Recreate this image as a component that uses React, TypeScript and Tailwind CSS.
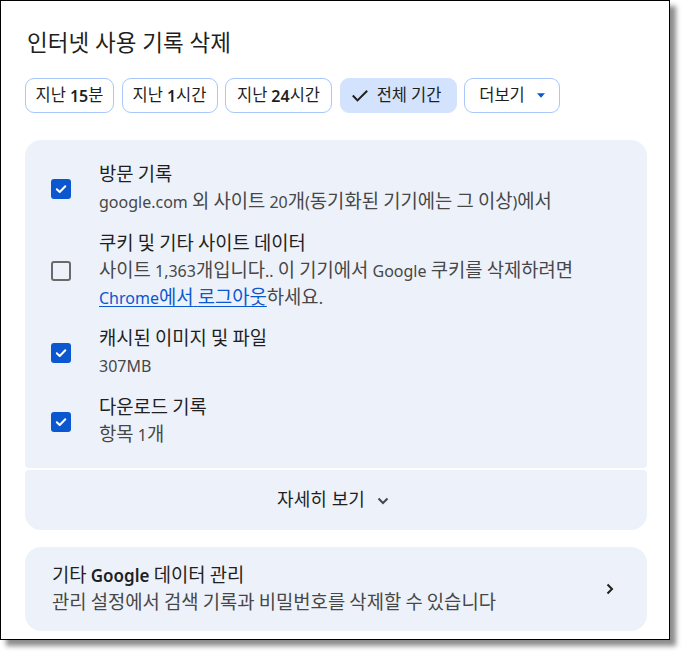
import React from "react";

const FONT = "font-['Noto_Sans','Noto_Sans_CJK_KR',sans-serif]";
const HSPLIT = /([\u3131-\u318E\uAC00-\uD7A3]+)/;
const HTEST = /^[\u3131-\u318E\uAC00-\uD7A3]+$/;

function K({ t, cls }: { t: string; cls: string }) {
  return (
    <>
      {t.split(HSPLIT).map((p, i) =>
        HTEST.test(p) ? (
          <span key={i} className={cls}>
            {p}
          </span>
        ) : (
          <React.Fragment key={i}>{p}</React.Fragment>
        )
      )}
    </>
  );
}

const BODY = "text-[18.8px] leading-none";
const CHIP = "text-[16.5px] leading-none";

function Check({ checked }: { checked: boolean }) {
  if (checked) {
    return (
      <div className="w-[20px] h-[20px] rounded-[3px] bg-[#0b57d0] flex items-center justify-center shrink-0">
        <svg width="14" height="14" viewBox="0 0 14 14">
          <path d="M2.8 7.2 L5.7 10 L11.3 4.2" fill="none" stroke="white" strokeWidth="2" strokeLinecap="round" strokeLinejoin="round" />
        </svg>
      </div>
    );
  }
  return <div className="w-[20px] h-[20px] rounded-[3px] border-2 border-[#6a6a6a] shrink-0" />;
}

function Row({ checked, children }: { checked: boolean; children: React.ReactNode }) {
  return (
    <div className="flex items-center">
      <div className="w-[74px] pl-[26px] flex">
        <Check checked={checked} />
      </div>
      <div className="flex flex-col text-[16px] leading-[27px]">{children}</div>
    </div>
  );
}

function Chip({ children, selected, w }: { children: React.ReactNode; selected?: boolean; w: string }) {
  return (
    <div
      className={
        (selected
          ? "h-[35px] rounded-[9px] bg-[#d3e3fd] border border-[#d3e3fd] flex items-center justify-center text-[16px] text-[#1f1f1f] "
          : "h-[35px] rounded-[9px] border border-[#a8c7fa] bg-white flex items-center justify-center text-[16px] text-[#1f1f1f] ") + w
      }
    >
      {children}
    </div>
  );
}

export default function App() {
  return (
    <div className={`${FONT} w-[682px] h-[667px] bg-white`}>
      <div className="w-[670px] h-[640px] border border-black bg-white shadow-[6px_6px_5px_rgba(0,0,0,0.45)] pl-[24px] pr-[22px] pt-[27px]">
        <div className="pl-[2px] text-[22.5px] leading-[30px] text-[#1f1f1f]">인터넷 사용 기록 삭제</div>
        <div className="flex gap-[7.5px] mt-[20px]">
          <Chip w="w-[89px]">
            <span className={CHIP}>지난</span>
            <span className="font-semibold ml-[4px]">15</span>
            <span className={CHIP}>분</span>
          </Chip>
          <Chip w="w-[96px]">
            <span className={CHIP}>지난</span>
            <span className="font-semibold ml-[4px]">1</span>
            <span className={CHIP}>시간</span>
          </Chip>
          <Chip w="w-[107px]">
            <span className={CHIP}>지난</span>
            <span className="font-semibold ml-[4px]">24</span>
            <span className={CHIP}>시간</span>
          </Chip>
          <Chip selected w="w-[117px]">
            <svg width="16" height="12" viewBox="0 0 16 12" className="mr-[9px] -ml-[3px]">
              <path d="M0.8 5.5 L5.5 10.4 L15.2 0.8" fill="none" stroke="#1f1f1f" strokeWidth="2" />
            </svg>
            <span className={CHIP}>전체</span>
            <span className="ml-[4px]" />
            <span className={CHIP}>기간</span>
          </Chip>
          <Chip w="w-[96px]">
            <span className={CHIP}>더보기</span>
            <svg width="8" height="5" viewBox="0 0 8 5" className="ml-[12px]">
              <path d="M0 0.3 L8 0.3 L4 4.7 Z" fill="#0b57d0" />
            </svg>
          </Chip>
        </div>

        <div className="mt-[27px] w-[622px]">
          <div className="bg-[#edf2fa] rounded-t-[16px] rounded-b-[4px] pt-[22px] pb-[19px] flex flex-col gap-[14.5px]">
            <Row checked>
              <div className="text-[#1f1f1f]">
                <K t="방문 기록" cls={BODY} />
              </div>
              <div className="text-[#474747]">
                <K t="google.com 외 사이트 20개(동기화된 기기에는 그 이상)에서" cls={BODY} />
              </div>
            </Row>
            <Row checked={false}>
              <div className="text-[#1f1f1f]">
                <K t="쿠키 및 기타 사이트 데이터" cls={BODY} />
              </div>
              <div className="text-[#474747]">
                <K t="사이트 1,363개입니다.. 이 기기에서 Google 쿠키를 삭제하려면" cls={BODY} />
              </div>
              <div className="text-[#474747]">
                <span className="text-[#0b57d0] underline underline-offset-[2px]">
                  <K t="Chrome에서 로그아웃" cls={BODY} />
                </span>
                <K t="하세요." cls={BODY} />
              </div>
            </Row>
            <Row checked>
              <div className="text-[#1f1f1f]">
                <K t="캐시된 이미지 및 파일" cls={BODY} />
              </div>
              <div className="text-[#474747]">307MB</div>
            </Row>
            <Row checked>
              <div className="text-[#1f1f1f]">
                <K t="다운로드 기록" cls={BODY} />
              </div>
              <div className="text-[#474747]">
                <K t="항목 1개" cls={BODY} />
              </div>
            </Row>
          </div>
          <div className="mt-[2px] h-[60px] bg-[#edf2fa] rounded-t-[4px] rounded-b-[16px] flex items-center justify-center pr-[5px] text-[16px] text-[#1f1f1f]">
            <span className="text-[18px] mr-[5px]">자세히</span>
            <span className="text-[18px]">보기</span>
            <svg width="14" height="14" viewBox="0 0 14 14" className="ml-[11px] mt-[2px]">
              <path d="M2.5 4.5 L7 9 L11.5 4.5" fill="none" stroke="#474747" strokeWidth="2" />
            </svg>
          </div>

          <div className="mt-[17px] h-[84px] bg-[#edf2fa] rounded-[16px] flex items-center pl-[27px] pr-[32px]">
            <div className="flex-1 flex flex-col text-[16px] leading-[27px] pt-[2px]">
              <div className="text-[#1f1f1f]">
                <K t="기타 " cls={BODY} />
                <span className="font-semibold text-[17px]">Google</span>
                <K t=" 데이터 관리" cls={BODY} />
              </div>
              <div className="text-[#474747]">
                <K t="관리 설정에서 검색 기록과 비밀번호를 삭제할 수 있습니다" cls={BODY} />
              </div>
            </div>
            <svg width="10" height="14" viewBox="0 0 10 14">
              <path d="M2.5 2.5 L7 7 L2.5 11.5" fill="none" stroke="#1f1f1f" strokeWidth="2" />
            </svg>
          </div>
        </div>
      </div>
    </div>
  );
}
